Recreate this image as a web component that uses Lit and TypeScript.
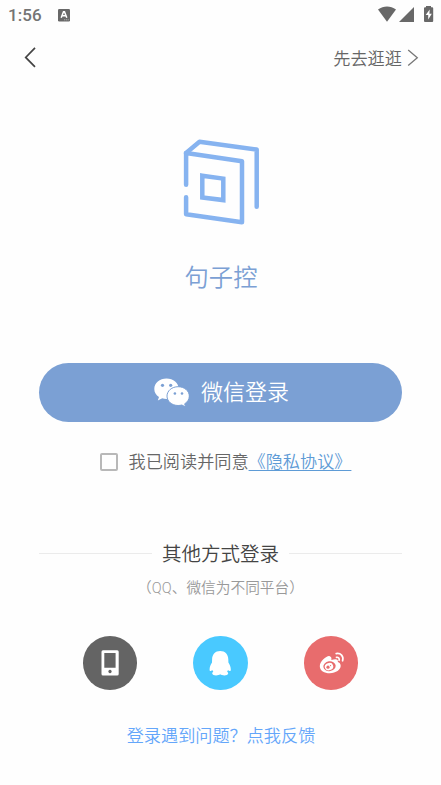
import { LitElement, html, css } from "lit";
import { customElement } from "lit/decorators.js";

@customElement("app-root")
export class AppRoot extends LitElement {
  static styles = css`
    :host {
      display: flex;
      flex-direction: column;
      align-items: center;
      box-sizing: border-box;
      width: 441px;
      height: 785px;
      overflow: hidden;
      background: #fefefe;
      color: #666;
      font-family: Roboto, "Noto Sans CJK SC", sans-serif;
      font-weight: 350;
      white-space: nowrap;
    }
    svg { display: block; flex: none; }
    .status {
      display: flex;
      width: 100%;
      height: 30px;
      align-items: center;
      box-sizing: border-box;
      padding-left: 8px;
    }
    .time { font-size: 17px; font-weight: 500; line-height: 30px; width: 49px; color: #747474; letter-spacing: 0.1px; }
    .signals { margin-left: auto; }
    .nav {
      display: flex;
      width: 100%;
      height: 56px;
      align-items: center;
      justify-content: space-between;
      box-sizing: border-box;
      padding: 0 21px 0 20px;
    }
    .skip { display: flex; align-items: center; gap: 4px; font-size: 17.2px; line-height: 26px; }
    .skip span { padding-top: 2px; }
    .logo { margin-top: 52px; }
    .brand { margin-top: 34px; padding-left: 1px; font-size: 24.3px; line-height: 36px; color: #7ba0d4; }
    .wechat {
      display: flex;
      align-items: center;
      justify-content: center;
      gap: 12px;
      width: 363px;
      height: 59px;
      margin-top: 67px;
      padding-left: 2px;
      box-sizing: border-box;
      border-radius: 30px;
      background: #7ba0d4;
      color: #fff;
      font-size: 22px;
      line-height: 32px;
    }
    .wechat span { padding-top: 1px; }
    .agree {
      display: flex;
      align-items: center;
      height: 26px;
      margin-top: 27px;
      margin-left: 10px;
      font-size: 17.15px;
      line-height: 26px;
    }
    .box {
      box-sizing: border-box;
      width: 18px;
      height: 18px;
      margin: 0 11px 1px 0;
      border: 2px solid #b8b8b8;
      border-radius: 2px;
    }
    .policy { color: #5e9bd6; text-decoration: underline; text-decoration-thickness: 1px; text-underline-offset: 2px; }
    .divider {
      display: flex;
      align-items: center;
      width: 363px;
      height: 30px;
      margin-top: 65px;
      gap: 10px;
      color: #444;
      font-size: 19.5px;
      line-height: 30px;
    }
    .rule { flex: 1; height: 1px; margin-bottom: 3px; background: #ebebeb; }
    .note { margin-top: 6px; font-size: 14.7px; line-height: 24px; color: #999; }
    .others { display: flex; gap: 56px; margin-top: 36px; }
    .circle { display: flex; width: 54.4px; height: 54px; border-radius: 50%; }
    .phone { background: #646464; }
    .qq { background: #49c9ff; }
    .weibo { background: #e86c6d; }
    .help { margin-top: 33px; padding-left: 1px; font-size: 17.15px; line-height: 26px; color: #64a6fa; }
  `;

  render() {
    return html`
      <div class="status">
        <span class="time">1:56</span>
        <svg width="14" height="14" viewBox="0 0 14 14">
          <rect x="1" y="1" width="12" height="12.5" rx="1.3" fill="#686868" />
          <path d="M4.2 9.7 6.5 3.7h1l2.3 6M5.1 7.7h3.8" fill="none" stroke="#fff" stroke-width="1.5" />
          <path d="M7 11.8h5" stroke="#bbb" stroke-width=".8" stroke-dasharray="1.2 .6" />
        </svg>
        <svg class="signals" width="64" height="30" viewBox="377 0 64 30" fill="#686868">
          <path d="M378 9.6C383.5 5.6 390.5 5.6 396 9.6L387 21.8Z" />
          <path d="M414 7v15h-15z" />
          <path fill-rule="evenodd" d="M426 6h5v1.2h1.2q1 0 1 1V21q0 1-1 1h-7.2q-1 0-1-1V8.2q0-1 1-1h1zM429.7 9.5l-4 5.5h2.5v4.5l3.6-5.8h-2.4z" />
        </svg>
      </div>
      <div class="nav">
        <svg width="22" height="22" viewBox="0 .6 22 22" fill="none" stroke="#444" stroke-width="1.7">
          <path d="M15 1.5 5.7 11 15 20.5" />
        </svg>
        <div class="skip">
          <span>先去逛逛</span>
          <svg width="14" height="20" viewBox="0 0 14 20" fill="none" stroke="#777" stroke-width="1.3">
            <path d="M2.2 2 11.3 9.8 2.2 17.6" />
          </svg>
        </div>
      </div>
      <svg class="logo" width="77" height="88" viewBox="182 138 77 88" overflow="visible" fill="none" stroke="#86b3f0" stroke-width="4.5" stroke-linecap="round" stroke-linejoin="round">
        <path d="M186.1 184.7V153L242 161.2V222.3L186.1 214.2V197.3" />
        <path d="M186.1 153 199.5 141.7 256.7 149.6V206.8" />
        <path stroke-linejoin="miter" d="M202.3 175.7 223.3 178.6V200.1L202.3 197.4Z" />
      </svg>
      <div class="brand">句子控</div>
      <div class="wechat">
        <svg width="35" height="29" viewBox="154 378 35 29">
          <path fill="#fff" d="M166.5 378.6c-6.8 0-12.2 4.6-12.2 10.3 0 3.3 1.8 6.1 4.7 8l-1.2 3.7 4.4-2.3c1.4.4 2.8.6 4.3.6 6.8 0 12.2-4.4 12.2-10S173.3 378.6 166.5 378.6z" />
          <path fill="#fff" stroke="#7ba0d4" stroke-width="1" d="M178.1 386.7c-6.300 0-11.100 4.200-11.100 9.400s4.800 9.400 11.100 9.400c1.300 0 2.600-.2 3.800-.5l3.700 2-.9-3.200c2.700-1.700 4.600-4.500 4.600-7.700 0-5.200-4.900-9.400-11.200-9.400z" />
          <g fill="#7ba0d4">
            <circle cx="162.5" cy="385.3" r="1.6" /><circle cx="170.7" cy="385.3" r="1.6" />
            <circle cx="174.9" cy="393.5" r="1.3" /><circle cx="182" cy="393.5" r="1.3" />
          </g>
        </svg>
        <span>微信登录</span>
      </div>
      <div class="agree">
        <span class="box"></span><span>我已阅读并同意</span><span class="policy">《隐私协议》</span>
      </div>
      <div class="divider"><span class="rule"></span><span>其他方式登录</span><span class="rule"></span></div>
      <div class="note">（QQ、微信为不同平台）</div>
      <div class="others">
        <div class="circle phone">
          <svg width="54" height="54" viewBox="0 0 54 54">
            <path fill="#fff" fill-rule="evenodd" d="M20 14.3h14.2q1.5 0 1.5 1.5v22.2q0 1.5-1.5 1.5H20q-1.5 0-1.5-1.5V15.8q0-1.5 1.5-1.5zM21.3 17v14.8h11.3V17zM27 33.8a1.7 1.7 0 1 0 .01 0z" />
          </svg>
        </div>
        <div class="circle qq">
          <svg width="54" height="54" viewBox="-.5 0 54 54">
            <path fill="#fff" d="M26.7 14.9c-4.9 0-8 3.5-8.100 8.300l-.1 3.300c-1.500 2.500-2.400 4.700-2.400 7 0 1.700.8 2 2 1l.9-.3.8 1.600c-.8.5-1.200 1.100-1.100 1.800.3 2.400 6.200 2.300 8 .7 1.800 1.600 7.700 1.700 8-.7.1-.7-.3-1.300-1.100-1.800l.8-1.600.9.3c1.200 1 2 .7 2-1 0-2.300-.9-4.500-2.400-7l-.1-3.300c-.1-4.800-3.200-8.300-8.100-8.300z" />
          </svg>
        </div>
        <div class="circle weibo">
          <svg width="54" height="54" viewBox="0 0 54 54">
            <path fill="#fff" d="M25.7 20.2c-2-1.300-9.900 4.700-9.900 10 0 4.300 4.600 7.100 10 7.100 6.200 0 10.900-3.800 10.900-7.500 0-2.200-1.300-3.300-2.900-3.900.9-2.700-1.800-3.600-6.500-1.900.6-2-.2-3.200-1.600-3.800z" />
            <ellipse cx="25.5" cy="30.2" rx="6.2" ry="4.9" transform="rotate(-8 25.5 30.2)" fill="#e86c6d" />
            <ellipse cx="25" cy="30.6" rx="4.3" ry="3.6" transform="rotate(-20 25 30.6)" fill="#fff" />
            <circle cx="24" cy="31.2" r="1.6" fill="#e86c6d" />
            <circle cx="26.5" cy="29.6" r=".7" fill="#e86c6d" />
            <path fill="none" stroke="#fff" stroke-width="1.7" stroke-linecap="round" d="M32.2 17.6c4.4-.9 7.8 2.7 6.4 7.2M32.5 21.3c1.9-.3 3.2 1.100 2.600 3" />
          </svg>
        </div>
      </div>
      <div class="help">登录遇到问题？点我反馈</div>
    `;
  }
}
